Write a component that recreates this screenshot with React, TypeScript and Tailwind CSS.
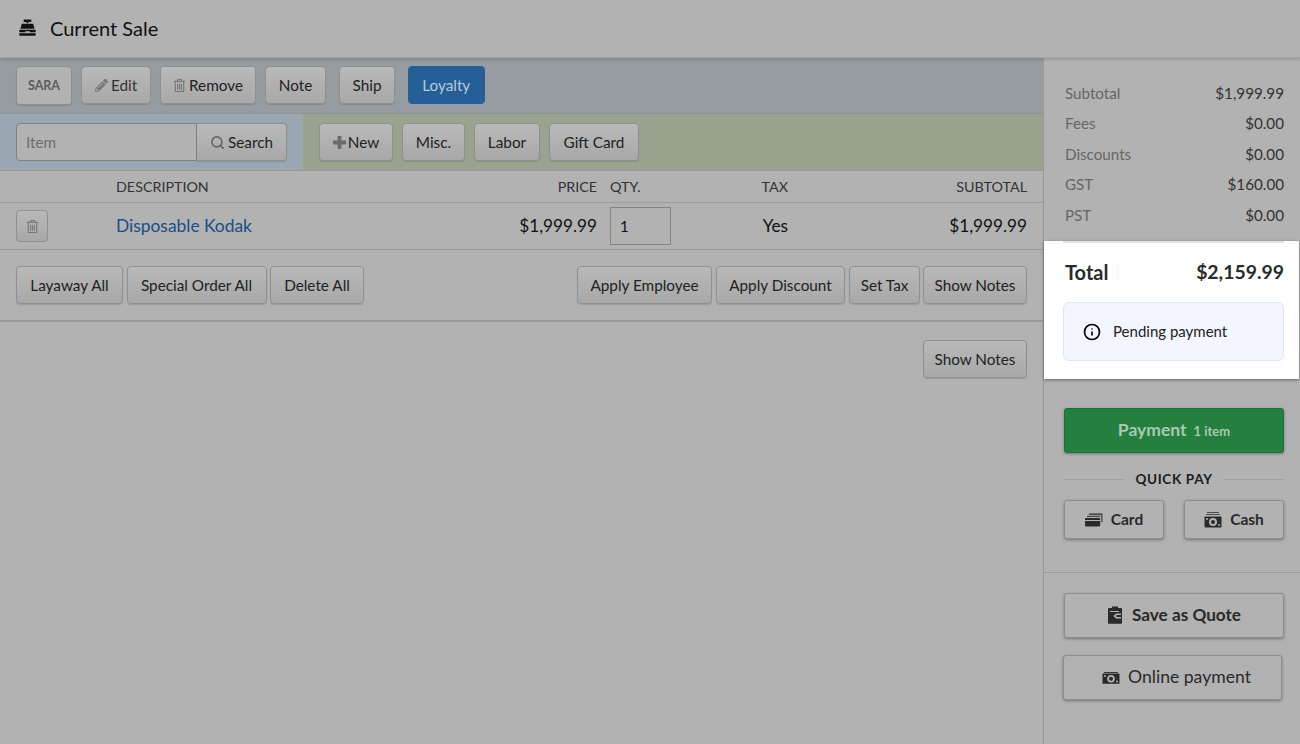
import type { ReactNode } from 'react'
import { Info, Search } from 'lucide-react'
import { FaPencilAlt } from 'react-icons/fa'

const btn = 'flex items-center justify-center h-[38px] pt-[1px] rounded-[4px] border border-[#8f9090] bg-gradient-to-b from-[#b9b9b9] to-[#a8a8a8] text-[15.3px] text-[#222] shadow-[0_1px_1px_rgba(0,0,0,0.12)] whitespace-nowrap'
const bigBtn = 'flex items-center justify-center rounded-[3px] border border-[#8b8f8f] bg-[#b2b2b2] text-[#2a2a2a] shadow-[0_1px_3px_rgba(0,0,0,0.35)] whitespace-nowrap'

function Trash({ className }: { className: string }) {
  return (
    <svg viewBox="0 0 14 16" className={className} fill="none" stroke="currentColor" strokeWidth="1.2">
      <path d="M1 3.5h12M5 3.5V1.6h4v1.9M2.5 3.5v11h9v-11M5 6v6.5M7 6v6.5M9 6v6.5" />
    </svg>
  )
}

function PlusIcon() {
  return (
    <svg viewBox="0 0 13 13" className="w-[13px] h-[13px] text-[#6a6a6a]" fill="currentColor">
      <path d="M4.6 0h3.8v4.6H13v3.8H8.400V13H4.600V8.400H0V4.600h4.600z" />
    </svg>
  )
}

function Register() {
  return (
    <svg viewBox="0 0 20 20" className="w-[19px] h-[19px] text-[#111]" fill="currentColor">
      <path d="M6 1.5h8v2.6h-3.200v1.500H9.200V4.100H6z" />
      <path d="M4 6h12l1.400 5.400H2.600z" />
      <path d="M1.400 12.400h17.200V15H12.500v-1H7.500v1H1.400z" />
      <path d="M1.400 16h17.200v2a.8.8 0 0 1-.8.8H2.200a.8.8 0 0 1-.8-.8z" />
    </svg>
  )
}

function Cards() {
  return (
    <svg viewBox="0 0 18 14" className="w-[18px] h-[14px] text-[#2a2a2a]" fill="currentColor">
      <path d="M4 .6h13.400v8.600h-1V1.700H4z" />
      <path d="M2 2.800h13.200v1H2z" />
      <rect x="0" y="5" width="15.2" height="8.4" rx="1" />
      <rect x="0" y="7" width="15.2" height="1" fill="#b2b2b2" />
    </svg>
  )
}

function CashStack() {
  return (
    <svg viewBox="0 0 18 16" className="w-[18px] h-[16px] text-[#2a2a2a]" fill="currentColor">
      <path d="M3 .2h12v.9H3zM2 2.200h14v.9H2z" />
      <rect x="0.5" y="4.4" width="17" height="11.2" rx="0.8" />
      <circle cx="9" cy="10" r="4" fill="#b2b2b2" />
      <circle cx="9" cy="10" r="2" />
      <circle cx="3" cy="7" r="1" fill="#b2b2b2" />
      <circle cx="15" cy="13" r="1" fill="#b2b2b2" />
    </svg>
  )
}

function Note() {
  return (
    <svg viewBox="0 0 18 12" className="w-[18px] h-[12px] text-[#2a2a2a]" fill="currentColor">
      <path d="M2 0h14v.9H2z" />
      <rect x="0.5" y="1.6" width="17" height="10.2" rx="0.6" />
      <circle cx="9" cy="6.7" r="3.8" fill="#b2b2b2" />
      <circle cx="9" cy="6.7" r="2" />
      <circle cx="3" cy="4" r="1" fill="#b2b2b2" />
      <circle cx="15" cy="9.4" r="1" fill="#b2b2b2" />
    </svg>
  )
}

function Quote() {
  return (
    <svg viewBox="0 0 16 18" className="w-[16px] h-[18px] text-[#2a2a2a]" fill="currentColor">
      <path d="M5 0.5h6V2h3a1 1 0 0 1 1 1v14a.8.8 0 0 1-.8.8H1.800A.8.8 0 0 1 1 17V3a1 1 0 0 1 1-1h3z" />
      <path d="M14 7.500H9L6.500 10 9 12.500h5v-1.600h-4.200L9 10l.8-.9H14z" fill="#b2b2b2" />
      <rect x="3" y="5" width="9" height="1" fill="#b2b2b2" />
    </svg>
  )
}

function SummaryRow({ label, value }: { label: string; value: string }) {
  return (
    <div className="flex justify-between h-[30.5px] items-center text-[15.2px]">
      <span className="text-[#666]">{label}</span>
      <span className="text-[#333]">{value}</span>
    </div>
  )
}

function Btn({ className, children }: { className: string; children: ReactNode }) {
  return <button className={`${btn} ${className}`}>{children}</button>
}

export default function App() {
  return (
    <div className="w-[1300px] h-[744px] overflow-hidden bg-[#b2b2b2] text-[#111] font-['Lato','Open_Sans',sans-serif] flex flex-col">
      <header className="relative z-10 h-[58px] shrink-0 flex items-center pb-[2px] pl-[18px] gap-[13px] border-b border-[#a3a3a3] shadow-[0_1px_4px_rgba(0,0,0,0.2)]">
        <Register />
        <h1 className="text-[20px] text-[#111]">Current Sale</h1>
      </header>

      <div className="flex flex-1 min-h-0">
        <main className="w-[1043px] shrink-0">
          <div className="h-[56px] bg-[#969ca0] flex items-center pl-[16px] pb-[1px] gap-[9px] border-b border-[#8f9696]">
            <Btn className="w-[56px] !h-[39px] !pt-[2px] !bg-none bg-[#b2b2b2] !text-[12.5px] font-bold !text-[#5c5c5c]">SARA</Btn>
            <Btn className="w-[70px] gap-[3px] text-[#333]"><FaPencilAlt className="w-[13px] h-[13px] text-[#777]" />Edit</Btn>
            <Btn className="w-[96px] gap-[3px]"><Trash className="w-[13px] h-[15px] text-[#777]" />Remove</Btn>
            <Btn className="w-[61px]">Note</Btn>
            <Btn className="w-[56px] ml-[4px]">Ship</Btn>
            <button className="ml-[4px] w-[76.5px] h-[38px] pt-[1px] rounded-[4px] border border-[#255f99] bg-[#255f98] text-[15.3px] text-[#b8c9da]">Loyalty</button>
          </div>

          <div className="h-[57px] flex border-b border-[#9a9a9a]">
            <div className="w-[303px] bg-[#9aa6b2] flex items-center pl-[16px]">
              <div className="flex w-[271px] h-[38px]">
                <div className="w-[181px] pt-[1px] border border-[#808080] rounded-l-[4px] bg-[#b2b2b2] pl-[9px] flex items-center text-[15.3px] text-[#6e6e6e]">Item</div>
                <Btn className="w-[90px] gap-[3px] !rounded-l-none border-l-0"><Search className="w-[15px] h-[15px] text-[#666]" strokeWidth={2.6} />Search</Btn>
              </div>
            </div>
            <div className="flex-1 bg-[#99a38f] flex items-center pl-[16px] gap-[9px]">
              <Btn className="w-[74px] gap-[2px]"><PlusIcon />New</Btn>
              <Btn className="w-[63px]">Misc.</Btn>
              <Btn className="w-[66px]">Labor</Btn>
              <Btn className="w-[90px]">Gift Card</Btn>
            </div>
          </div>

          <div className="h-[32px] grid grid-cols-[116px_481px_191px_1fr] items-center pr-[16px] text-[14.3px] text-[#333] border-b border-[#9c9c9c]">
            <span className="col-start-2 flex justify-between">
              <span>DESCRIPTION</span>
              <span>PRICE</span>
            </span>
            <span className="pl-[13px] flex justify-between"><span>QTY.</span><span>TAX</span></span>
            <span className="text-right">SUBTOTAL</span>
          </div>

          <div className="h-[47px] grid grid-cols-[116px_481px_191px_1fr] items-center pr-[16px] border-b border-[#9c9c9c] text-[17.2px]">
            <div className="pl-[16px]">
              <button className="flex items-center justify-center w-[32px] h-[32px] rounded-[4px] border border-[#8f9090] bg-gradient-to-b from-[#b9b9b9] to-[#a8a8a8]">
                <Trash className="w-[13px] h-[15px] text-[#7a7a7a]" />
              </button>
            </div>
            <div className="flex justify-between items-center">
              <span className="text-[#174f82] text-[17.4px] pt-[1px]">Disposable Kodak</span>
              <span className="text-[#111]">$1,999.99</span>
            </div>
            <div className="pl-[13px] flex justify-between items-center">
              <div className="w-[61px] h-[38px] border border-[#838383] pl-[9px] flex items-center text-[15px]">1</div>
              <span>Yes</span>
            </div>
            <div className="text-right">$1,999.99</div>
          </div>

          <div className="h-[72px] flex items-center justify-between px-[16px] border-b-2 border-[#989b9b]">
            <div className="flex gap-[3.5px]">
              <Btn className="w-[107px]">Layaway All</Btn>
              <Btn className="w-[140px]">Special Order All</Btn>
              <Btn className="w-[94px]">Delete All</Btn>
            </div>
            <div className="flex gap-[4px]">
              <Btn className="w-[135px]">Apply Employee</Btn>
              <Btn className="w-[129px]">Apply Discount</Btn>
              <Btn className="w-[71px] mr-[-1px]">Set Tax</Btn>
              <Btn className="w-[104px]">Show Notes</Btn>
            </div>
          </div>

          <div className="flex justify-end pt-[18px] pr-[16px]">
            <Btn className="w-[104px]">Show Notes</Btn>
          </div>
        </main>

        <aside className="flex-1 border-l border-[#999] flex flex-col min-w-0">
          <div className="pt-[20px] pl-[21px] pr-[16px] h-[183px]">
            <SummaryRow label="Subtotal" value="$1,999.99" />
            <SummaryRow label="Fees" value="$0.00" />
            <SummaryRow label="Discounts" value="$0.00" />
            <SummaryRow label="GST" value="$160.00" />
            <SummaryRow label="PST" value="$0.00" />
          </div>

          <section className="h-[138px] bg-white mr-[1px] pl-[19px] pr-[15px] shadow-[0_1px_3px_rgba(0,0,0,0.45)]">
            <div className="h-[2px] bg-[#dfe3e3]" />
            <div className="flex justify-between items-center h-[59px] pb-[2px] pl-[2px] font-bold text-[#2b2b2b]">
              <span className="text-[20px]">Total</span>
              <span className="text-[19.4px]">$2,159.99</span>
            </div>
            <div className="h-[59px] rounded-[6px] border border-[#dde6fa] bg-[#f3f6fe] flex items-center pl-[19px] gap-[12px] text-[15px] text-[#222]">
              <Info className="w-[18px] h-[18px] text-black" strokeWidth={2.2} />
              Pending payment
            </div>
          </section>

          <div className="h-[194px] border-b border-[#9c9c9c] pt-[29px] pl-[20px] pr-[16px]">
            <button className="w-full h-[45px] rounded-[3px] border border-[#1e6e38] bg-[#24803f] text-[#a9c9b3] font-bold text-[17.5px] shadow-[0_1px_3px_rgba(0,0,0,0.35)] flex items-center justify-center gap-[7px]">
              Payment <span className="text-[13px] pt-[2px]">1 item</span>
            </button>
            <div className="flex items-center h-[14px] mt-[19px] gap-[10px]">
              <div className="flex-1 h-px bg-[#a2a2a2]" />
              <span className="text-[13.5px] font-bold tracking-[0.05em] text-[#1c1c1c]">QUICK PAY</span>
              <div className="flex-1 h-px bg-[#a2a2a2]" />
            </div>
            <div className="flex justify-between mt-[14px]">
              <button className={`${bigBtn} w-[100px] h-[39px] gap-[8px] text-[15.5px] font-bold`}><Cards />Card</button>
              <button className={`${bigBtn} w-[100px] h-[39px] gap-[8px] text-[15.5px] font-bold`}><CashStack />Cash</button>
            </div>
          </div>

          <div className="pt-[20px] pl-[20px] pr-[16px]">
            <button className={`${bigBtn} w-full h-[45px] pb-[2px] gap-[9px] text-[17.2px] font-bold`}><Quote />Save as Quote</button>
            <button className={`${bigBtn} w-[219px] -ml-[1px] mt-[17px] h-[45px] pl-[8px] gap-[8px] text-[17.6px]`}><Note />Online payment</button>
          </div>
        </aside>
      </div>
    </div>
  )
}
